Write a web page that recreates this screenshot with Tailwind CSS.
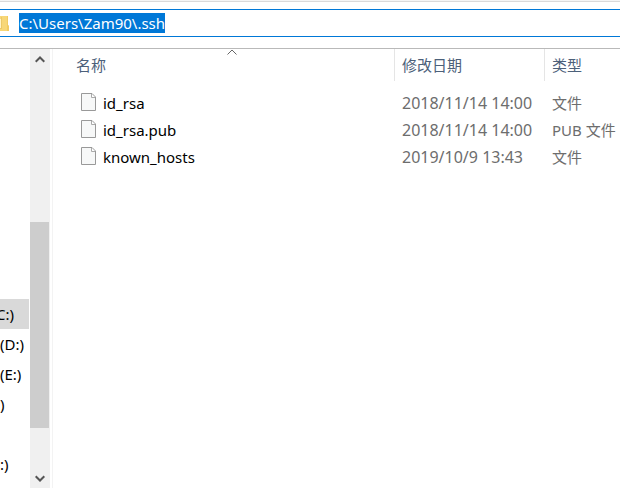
<!DOCTYPE html>
<html lang="zh-CN">
<head>
<meta charset="utf-8">
<meta name="viewport" content="width=device-width, initial-scale=1">
<title>.ssh</title>
<script src="https://cdn.jsdelivr.net/npm/@tailwindcss/browser@4"></script>
</head>
<body class="flex min-h-screen flex-col bg-white pb-[10px] font-['Noto_Sans','Noto_Sans_CJK_SC',sans-serif] text-[15px] leading-5 text-black">
  <svg class="hidden" aria-hidden="true">
    <symbol id="file" viewBox="0 0 15 19">
      <path d="M.5 .5H11L14.5 4V17.5H.5Z" fill="#f7f8f8" stroke="#999"/>
      <path d="M10.5 1V4.5H14" fill="#fff" stroke="#aaa"/>
    </symbol>
  </svg>

  <header class="border-b border-[#b9b9b9] bg-white pb-[11px]">
    <div class="h-[2px] border-b border-[#dadada] bg-[#f5f5f5]"></div>
    <div class="mt-[7px] flex h-7 items-center border-y border-[#0078d7]">
      <svg class="h-[15px] w-[9px] shrink-0" viewBox="0 0 9 15" aria-hidden="true">
        <path d="M0 0H8V9L9 10V15H0Z" fill="#f7d778"/>
        <path d="M0 3H1V12H0Z" fill="#fff3c8"/>
        <path d="M1 1H2V13H0V12H1Z" fill="#ecc867"/>
        <path d="M7 0H8V9L9 10V15H7Z" fill="#f1cb62"/>
      </svg>
      <input type="text" aria-label="地址" value="C:\Users\Zam90\.ssh" class="ml-[10px] field-sizing-content h-5 bg-[#0078d7] leading-5 text-white outline-none">
    </div>
  </header>

  <main class="flex flex-1">
    <nav class="w-[30px] shrink-0 overflow-hidden pt-[250px] pr-px whitespace-nowrap" aria-label="驱动器">
      <a href="#" class="flex h-[30px] items-center bg-[#d9d9d9]"><span class="-ml-1">C:)</span></a>
      <a href="#" class="flex h-[30px] items-center">(D:)</a>
      <a href="#" class="flex h-[30px] items-center">(E:)</a>
      <a href="#" class="flex h-[30px] items-center">)</a>
      <div class="h-[30px]"></div>
      <a href="#" class="flex h-[30px] items-center">:)</a>
    </nav>

    <div class="flex w-5 shrink-0 flex-col bg-[#f0f0f0]">
      <button type="button" class="flex h-5 items-center justify-center pr-px" aria-label="向上滚动">
        <svg class="h-[7px] w-[10px]" viewBox="0 0 10 7" fill="none" stroke="#555" stroke-width="2" aria-hidden="true"><path d="M.7 5.8L5 1.5L9.3 5.8"/></svg>
      </button>
      <div class="flex flex-1 flex-col pr-px">
        <div class="flex-[153]"></div>
        <div class="flex-[206] bg-[#cdcdcd]"></div>
        <div class="flex-[40]"></div>
      </div>
      <button type="button" class="flex h-5 items-center justify-center pr-px" aria-label="向下滚动">
        <svg class="h-[7px] w-[10px]" viewBox="0 0 10 7" fill="none" stroke="#555" stroke-width="2" aria-hidden="true"><path d="M.7 1.2L5 5.5L9.3 1.2"/></svg>
      </button>
    </div>

    <section class="ml-[2px] min-w-0 flex-1 overflow-hidden border-l border-[#f3f3f3] pl-4">
      <table class="w-full table-fixed border-separate border-spacing-0 text-left whitespace-nowrap">
        <colgroup>
          <col class="w-[326px]">
          <col class="w-[150px]">
          <col>
        </colgroup>
        <thead class="text-[#4c607a]">
          <tr class="h-8">
            <th scope="col" aria-sort="ascending" class="relative border-r border-[#e5e5e5] p-0 pl-[7px] font-normal">名称
              <svg class="absolute top-0 left-1/2 h-[7px] w-[11px] -translate-x-1/2" viewBox="0 0 11 7" fill="none" stroke="#666" aria-hidden="true"><path d="M1 5.5L5.5 1L10 5.5"/></svg>
            </th>
            <th scope="col" class="border-r border-[#e5e5e5] p-0 pl-[7px] font-normal">修改日期</th>
            <th scope="col" class="p-0 pl-[7px] font-normal">类型</th>
          </tr>
        </thead>
        <tbody class="text-[#6d6d6d]">
          <tr aria-hidden="true"><td colspan="3" class="h-2 p-0"></td></tr>
          <tr class="h-[27px]">
            <td class="p-0 pl-3"><span class="flex items-center gap-[7px] text-black"><svg class="h-[19px] w-[15px]" aria-hidden="true"><use href="#file"/></svg>id_rsa</span></td>
            <td class="p-0 pl-[7px] text-[16px] leading-5">2018/11/14 14:00</td>
            <td class="p-0 pl-[7px]">文件</td>
          </tr>
          <tr class="h-[27px]">
            <td class="p-0 pl-3"><span class="flex items-center gap-[7px] text-black"><svg class="h-[19px] w-[15px]" aria-hidden="true"><use href="#file"/></svg>id_rsa.pub</span></td>
            <td class="p-0 pl-[7px] text-[16px] leading-5">2018/11/14 14:00</td>
            <td class="p-0 pl-[7px]">PUB 文件</td>
          </tr>
          <tr class="h-[27px]">
            <td class="p-0 pl-3"><span class="flex items-center gap-[7px] text-black"><svg class="h-[19px] w-[15px]" aria-hidden="true"><use href="#file"/></svg>known_hosts</span></td>
            <td class="p-0 pl-[7px] text-[16px] leading-5">2019/10/9 13:43</td>
            <td class="p-0 pl-[7px]">文件</td>
          </tr>
        </tbody>
      </table>
    </section>
  </main>
</body>
</html>
